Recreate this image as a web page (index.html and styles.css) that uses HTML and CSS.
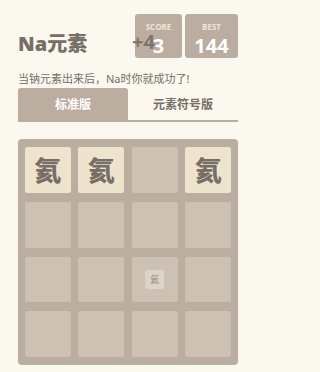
FILE: index.html
```html
<!DOCTYPE html>
<html lang="zh">
<head>
<meta charset="utf-8">
<title>Na元素</title>
<link rel="stylesheet" href="styles.css">
</head>
<body>
<div class="container">
  <div class="heading">
    <h1 class="title">Na元素</h1>
    <div class="scores">
      <div class="score-box score">
        <span class="label">SCORE</span>
        <span class="value">3</span>
        <span class="addition">+4</span>
      </div>
      <div class="score-box best">
        <span class="label">BEST</span>
        <span class="value">144</span>
      </div>
    </div>
  </div>
  <p class="intro">当钠元素出来后，Na时你就成功了!</p>
  <div class="tabs">
    <div class="tab active">标准版</div>
    <div class="tab">元素符号版</div>
  </div>
  <div class="grid">
    <div class="cell filled">氦</div>
    <div class="cell filled">氦</div>
    <div class="cell"></div>
    <div class="cell filled">氦</div>
    <div class="cell"></div>
    <div class="cell"></div>
    <div class="cell"></div>
    <div class="cell"></div>
    <div class="cell"></div>
    <div class="cell"></div>
    <div class="cell"><div class="new-tile">氦</div></div>
    <div class="cell"></div>
    <div class="cell"></div>
    <div class="cell"></div>
    <div class="cell"></div>
    <div class="cell"></div>
  </div>
</div>
</body>
</html>
```

FILE: styles.css
```css
* { box-sizing: border-box; }
html, body {
  margin: 0;
  padding: 0;
  background: #faf8ef;
  color: #776e65;
  font-family: "Noto Sans", "Noto Sans CJK SC", sans-serif;
}
.container {
  width: 220px;
  margin: 0 18px;
  padding-top: 14px;
}
.heading {
  display: flex;
  justify-content: space-between;
  align-items: flex-end;
  height: 44px;
}
.title {
  margin: 0 0 2px 0;
  font-size: 20px;
  line-height: 24px;
  font-weight: 900;
  color: #776e65;
}
.scores {
  display: flex;
  gap: 3px;
  height: 44px;
}
.score-box {
  position: relative;
  background: #bbada0;
  border-radius: 3px;
  display: flex;
  flex-direction: column;
  align-items: center;
  padding-top: 8px;
}
.score-box.score { width: 47px; }
.score-box.best { width: 53px; }
.label {
  font-family: "Open Sans", sans-serif;
  font-size: 8px;
  line-height: 9px;
  color: #eee4da;
  font-weight: bold;
}
.value {
  font-family: "Open Sans", sans-serif;
  margin-top: 4px;
  font-size: 20px;
  line-height: 21px;
  color: #ffffff;
  font-weight: bold;
}
.addition {
  position: absolute;
  left: -3px;
  top: 17px;
  font-family: "Open Sans", sans-serif;
  font-size: 20px;
  line-height: 21px;
  font-weight: bold;
  color: rgba(119, 110, 101, 0.9);
}
.intro {
  margin: 14px 0 0 0;
  font-size: 11px;
  line-height: 14px;
  color: #776e65;
}
.tabs {
  display: flex;
  margin-top: 2px;
  border-bottom: 2px solid #bbada0;
}
.tab {
  flex: 1;
  height: 32px;
  display: flex;
  align-items: center;
  justify-content: center;
  font-size: 12px;
  font-weight: bold;
  color: #776e65;
}
.tab.active {
  background: #bbada0;
  color: #ffffff;
  border-radius: 3px 3px 0 0;
}
.grid {
  margin-top: 17px;
  width: 220px;
  height: 226px;
  background: #bbada0;
  border-radius: 4px;
  padding: 8px 7px;
  display: grid;
  grid-template-columns: repeat(4, 1fr);
  grid-template-rows: repeat(4, 1fr);
  column-gap: 7.7px;
  row-gap: 9px;
}
.cell {
  background: #cdc1b4;
  border-radius: 2px;
  display: flex;
  align-items: center;
  justify-content: center;
}
.cell.filled {
  background: #eee3cd;
  font-family: "Noto Sans CJK SC", sans-serif;
  font-size: 27px;
  font-weight: 900;
  color: #776e65;
}
.new-tile {
  width: 19px;
  height: 19px;
  background: #ddd3c7;
  border-radius: 2px;
  display: flex;
  align-items: center;
  justify-content: center;
  font-family: "Noto Sans CJK SC", sans-serif;
  font-size: 9px;
  font-weight: bold;
  color: #a89d92;
}
```
